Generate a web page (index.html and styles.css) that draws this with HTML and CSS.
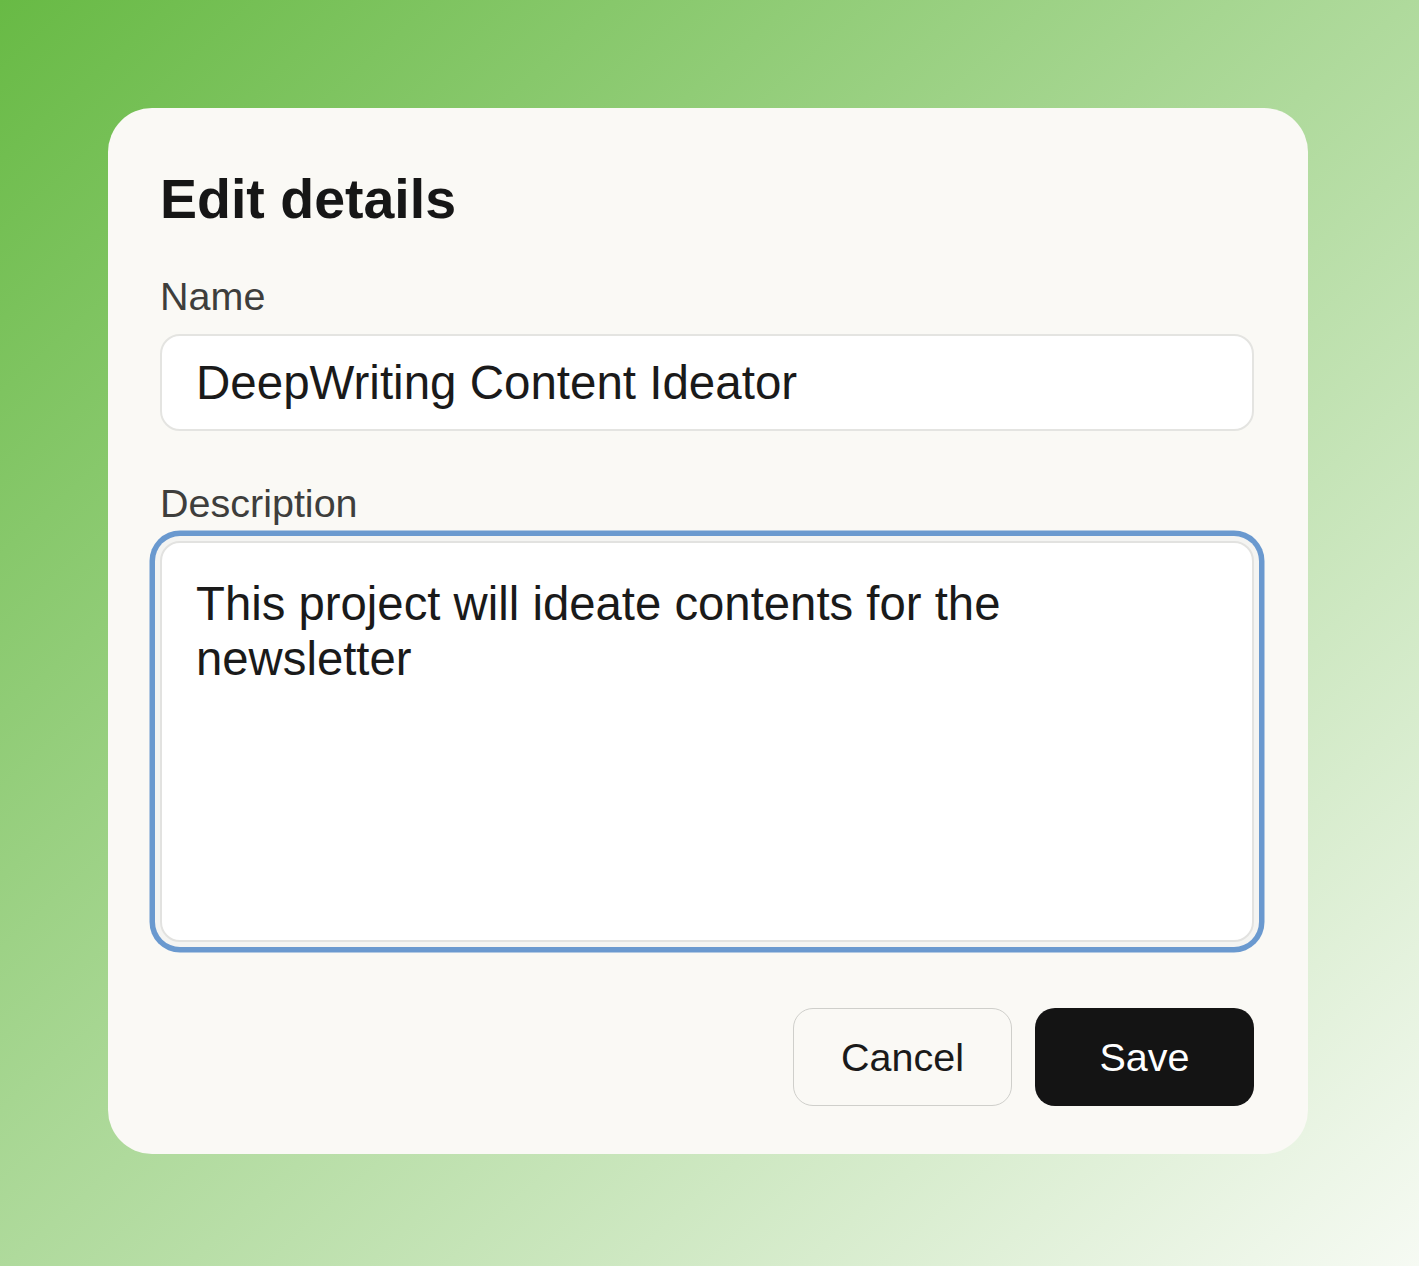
FILE: index.html
```html
<!DOCTYPE html>
<html lang="en">
<head>
<meta charset="utf-8">
<title>Edit details</title>
<link rel="stylesheet" href="styles.css">
</head>
<body>
<div class="stage">
  <form class="card">
    <h1 class="title">Edit details</h1>
    <label class="label" for="name">Name</label>
    <div class="input" id="name">DeepWriting Content Ideator</div>
    <label class="label label-desc" for="desc">Description</label>
    <div class="textarea" id="desc">This project will ideate contents for the<br>newsletter</div>
    <div class="actions">
      <button type="button" class="btn btn-cancel">Cancel</button>
      <button type="button" class="btn btn-save">Save</button>
    </div>
  </form>
</div>
</body>
</html>
```
FILE: styles.css
```css
* { box-sizing: border-box; }
html, body { margin: 0; padding: 0; }
body {
  width: 1419px;
  height: 1266px;
  overflow: hidden;
  font-family: "Liberation Sans", Arial, sans-serif;
  background: linear-gradient(138deg, #68ba45 0%, #afda9c 50%, #f6faf3 100%);
}
.stage {
  padding: 108px 0 0 108px;
}
.card {
  width: 1200px;
  height: 1046px;
  background: #faf9f5;
  border-radius: 44px;
  padding: 58px 54px 48px 52px;
  display: flex;
  flex-direction: column;
}
.title {
  margin: 0;
  font-size: 55.5px;
  line-height: 66px;
  font-weight: 700;
  color: #161616;
}
.label {
  display: block;
  margin-top: 40px;
  font-size: 39.5px;
  line-height: 48px;
  color: #3e3e3c;
}
.label-desc { margin-top: 48px; }
.input {
  margin-top: 14px;
  height: 97px;
  background: #ffffff;
  border: 2px solid #e4e4e1;
  border-radius: 20px;
  padding: 0 34px;
  display: flex;
  align-items: center;
  font-size: 47.5px;
  color: #1a1a1a;
}
.textarea {
  margin-top: 14px;
  height: 401px;
  background: #ffffff;
  border: 2px solid #e2e2e0;
  border-radius: 20px;
  padding: 33px 34px;
  font-size: 47.3px;
  line-height: 55px;
  color: #1a1a1a;
  box-shadow: 0 0 0 5px #f4f4f2, 0 0 0 10.5px #6a99cf;
}
.actions {
  margin-top: 66px;
  display: flex;
  justify-content: flex-end;
  gap: 23px;
}
.btn {
  width: 219px;
  height: 98px;
  border-radius: 20px;
  font-family: "Liberation Sans", Arial, sans-serif;
  font-size: 39.5px;
  padding: 0;
  cursor: pointer;
}
.btn-cancel {
  background: transparent;
  border: 1.5px solid #cfcfcb;
  color: #1a1a1a;
}
.btn-save {
  background: #141414;
  border: none;
  color: #ffffff;
}
```
